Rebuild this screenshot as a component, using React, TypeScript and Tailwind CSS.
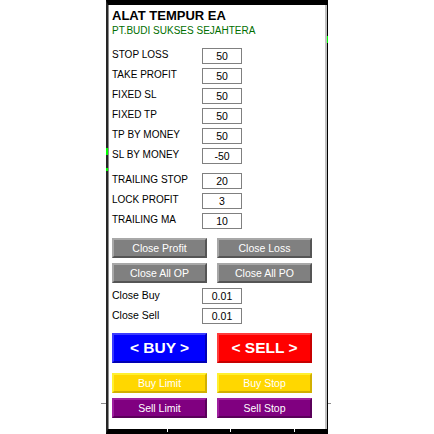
import React from "react";

type Row = { label: string; value: string };

const group1: Row[] = [
  { label: "STOP LOSS", value: "50" },
  { label: "TAKE PROFIT", value: "50" },
  { label: "FIXED SL", value: "50" },
  { label: "FIXED TP", value: "50" },
  { label: "TP BY MONEY", value: "50" },
  { label: "SL BY MONEY", value: "-50" },
];

const group2: Row[] = [
  { label: "TRAILING STOP", value: "20" },
  { label: "LOCK PROFIT", value: "3" },
  { label: "TRAILING MA", value: "10" },
];

function Field({ label, value, mixed }: Row & { mixed?: boolean }) {
  return (
    <div className="flex h-[20px] items-center">
      <span
        className={`w-[90px] pb-[2px] leading-none text-black ${mixed ? "text-[10.5px]" : "text-[10px]"}`}
      >
        {label}
      </span>
      <div className="flex h-[16px] w-[40px] items-center justify-center border border-[#808080] bg-white text-[10.5px] leading-none text-black">
        {value}
      </div>
    </div>
  );
}

function Btn({ label, cls, h = "h-[20px]", text = "text-[10.5px]" }: { label: string; cls: string; h?: string; text?: string }) {
  return (
    <div className={`flex w-[95px] items-center justify-center border-2 leading-none text-white ${h} ${text} ${cls}`}>
      {label}
    </div>
  );
}

export default function App() {
  return (
    <div className="relative flex h-[434px] w-[434px] bg-white font-['Liberation_Sans',Arial,sans-serif]">
      <div className="ml-[106px] flex h-[434px] w-[222px] border-b-[5px] border-l-2 border-r border-t-[5px] border-b-black border-l-[#262626] border-r-black border-t-black">
        <div className="flex flex-1 flex-col border-l border-r-2 border-l-[#8c8c8c] border-r-[#c0c0c0] pl-[3px] pt-[4px]">
          <div className="text-[13px] font-bold leading-[13px] text-black">ALAT TEMPUR EA</div>
          <div className="mt-[4px] text-[10px] leading-[10px] text-[#006e00]">PT.BUDI SUKSES SEJAHTERA</div>

          <div className="mt-[10px] flex flex-col">
            {group1.map((r) => (
              <Field key={r.label} {...r} />
            ))}
          </div>
          <div className="mt-[5px] flex flex-col">
            {group2.map((r) => (
              <Field key={r.label} {...r} />
            ))}
          </div>

          <div className="mt-[7px] flex gap-[10px]">
            <Btn label="Close Profit" cls="bg-[#808080] border-t-[#a8a8a8] border-l-[#a8a8a8] border-b-[#555555] border-r-[#555555]" />
            <Btn label="Close Loss" cls="bg-[#808080] border-t-[#a8a8a8] border-l-[#a8a8a8] border-b-[#555555] border-r-[#555555]" />
          </div>
          <div className="mt-[5px] flex gap-[10px]">
            <Btn label="Close All OP" cls="bg-[#808080] border-t-[#a8a8a8] border-l-[#a8a8a8] border-b-[#555555] border-r-[#555555]" />
            <Btn label="Close All PO" cls="bg-[#808080] border-t-[#a8a8a8] border-l-[#a8a8a8] border-b-[#555555] border-r-[#555555]" />
          </div>

          <div className="mt-[3px] flex flex-col">
            <Field label="Close Buy" value="0.01" mixed />
            <Field label="Close Sell" value="0.01" mixed />
          </div>

          <div className="mt-[7px] flex gap-[10px]">
            <Btn
              label="< BUY >"
              h="h-[30px]"
              text="text-[15.5px] font-bold"
              cls="bg-[#0000ff] border-t-[#3c3cff] border-l-[#3c3cff] border-b-[#0000b4] border-r-[#0000b4]"
            />
            <Btn
              label="< SELL >"
              h="h-[30px]"
              text="text-[15.5px] font-bold"
              cls="bg-[#ff0000] border-t-[#ff3c3c] border-l-[#ff3c3c] border-b-[#c80000] border-r-[#c80000]"
            />
          </div>

          <div className="mt-[10px] flex gap-[10px]">
            <Btn label="Buy Limit" cls="bg-[#ffd700] border-t-[#fff030] border-l-[#fff030] border-b-[#d2b000] border-r-[#d2b000]" />
            <Btn label="Buy Stop" cls="bg-[#ffd700] border-t-[#fff030] border-l-[#fff030] border-b-[#d2b000] border-r-[#d2b000]" />
          </div>
          <div className="mt-[5px] flex gap-[10px]">
            <Btn label="Sell Limit" cls="bg-[#800080] border-t-[#a020a0] border-l-[#a020a0] border-b-[#5a005a] border-r-[#5a005a]" />
            <Btn label="Sell Stop" cls="bg-[#800080] border-t-[#a020a0] border-l-[#a020a0] border-b-[#5a005a] border-r-[#5a005a]" />
          </div>
        </div>
      </div>

      {/* chart marks behind the panel */}
      <div className="absolute left-[106px] top-[148px] h-[7px] w-[2px] bg-[#00ff00]" />
      <div className="absolute left-[106px] top-[168px] h-[3px] w-[2px] bg-[#00ff00]" />
      <div className="absolute left-[327px] top-[36px] h-[7px] w-px bg-[#00ff00]" />
      <div className="absolute left-[167px] top-[429px] h-[3px] w-px bg-white" />
      <div className="absolute left-[230px] top-[429px] h-[3px] w-px bg-white" />
      <div className="absolute left-[294px] top-[429px] h-[3px] w-px bg-white" />
      <div className="absolute left-[101px] top-[403px] h-px w-[5px] bg-[#8c8c8c]" />
      <div className="absolute left-[328px] top-[403px] h-px w-[3px] bg-[#8c8c8c]" />
    </div>
  );
}
